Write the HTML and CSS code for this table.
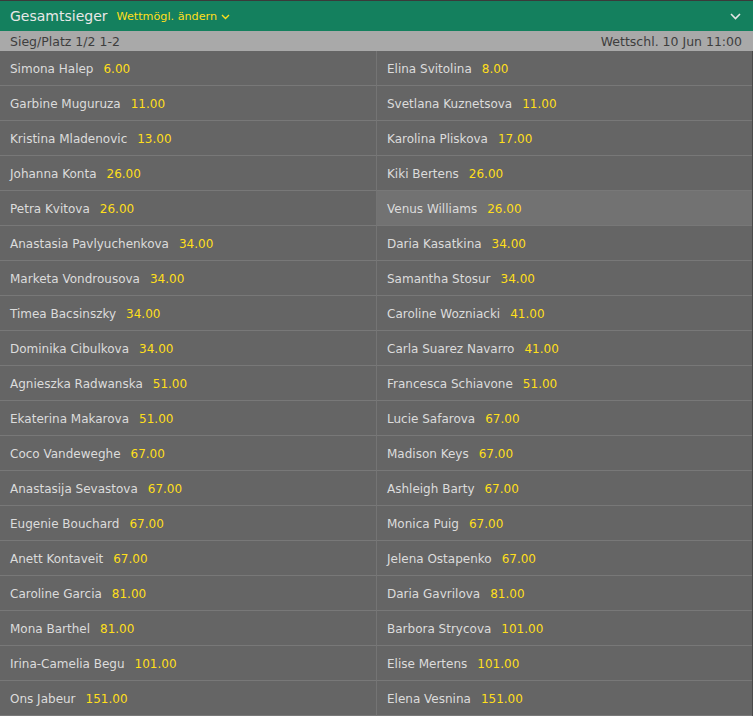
FILE: index.html
```html
<!DOCTYPE html>
<html lang="de">
<head>
<meta charset="utf-8">
<title>Gesamtsieger</title>
<link rel="stylesheet" href="styles.css">
</head>
<body>
<div class="market">
  <div class="header">
    <span class="title">Gesamtsieger</span>
    <span class="change">Wettmögl. ändern
      <svg class="chev-sm" width="9" height="6" viewBox="0 0 9 6"><path d="M1 1 L4.5 4.5 L8 1" fill="none" stroke="#ffdf1b" stroke-width="1.4"/></svg>
    </span>
    <svg class="chev" width="11" height="7" viewBox="0 0 11 7"><path d="M1 1 L5.5 5.5 L10 1" fill="none" stroke="#e6e6e6" stroke-width="1.6"/></svg>
  </div>
  <div class="sub">
    <span>Sieg/Platz 1/2 1-2</span>
    <span>Wettschl. 10 Jun 11:00</span>
  </div>
  <div class="grid">
    <div class="cell"><span class="name">Simona Halep</span><span class="odds">6.00</span></div>
    <div class="cell"><span class="name">Elina Svitolina</span><span class="odds">8.00</span></div>
    <div class="cell"><span class="name">Garbine Muguruza</span><span class="odds">11.00</span></div>
    <div class="cell"><span class="name">Svetlana Kuznetsova</span><span class="odds">11.00</span></div>
    <div class="cell"><span class="name">Kristina Mladenovic</span><span class="odds">13.00</span></div>
    <div class="cell"><span class="name">Karolina Pliskova</span><span class="odds">17.00</span></div>
    <div class="cell"><span class="name">Johanna Konta</span><span class="odds">26.00</span></div>
    <div class="cell"><span class="name">Kiki Bertens</span><span class="odds">26.00</span></div>
    <div class="cell"><span class="name">Petra Kvitova</span><span class="odds">26.00</span></div>
    <div class="cell hover"><span class="name">Venus Williams</span><span class="odds">26.00</span></div>
    <div class="cell"><span class="name">Anastasia Pavlyuchenkova</span><span class="odds">34.00</span></div>
    <div class="cell"><span class="name">Daria Kasatkina</span><span class="odds">34.00</span></div>
    <div class="cell"><span class="name">Marketa Vondrousova</span><span class="odds">34.00</span></div>
    <div class="cell"><span class="name">Samantha Stosur</span><span class="odds">34.00</span></div>
    <div class="cell"><span class="name">Timea Bacsinszky</span><span class="odds">34.00</span></div>
    <div class="cell"><span class="name">Caroline Wozniacki</span><span class="odds">41.00</span></div>
    <div class="cell"><span class="name">Dominika Cibulkova</span><span class="odds">34.00</span></div>
    <div class="cell"><span class="name">Carla Suarez Navarro</span><span class="odds">41.00</span></div>
    <div class="cell"><span class="name">Agnieszka Radwanska</span><span class="odds">51.00</span></div>
    <div class="cell"><span class="name">Francesca Schiavone</span><span class="odds">51.00</span></div>
    <div class="cell"><span class="name">Ekaterina Makarova</span><span class="odds">51.00</span></div>
    <div class="cell"><span class="name">Lucie Safarova</span><span class="odds">67.00</span></div>
    <div class="cell"><span class="name">Coco Vandeweghe</span><span class="odds">67.00</span></div>
    <div class="cell"><span class="name">Madison Keys</span><span class="odds">67.00</span></div>
    <div class="cell"><span class="name">Anastasija Sevastova</span><span class="odds">67.00</span></div>
    <div class="cell"><span class="name">Ashleigh Barty</span><span class="odds">67.00</span></div>
    <div class="cell"><span class="name">Eugenie Bouchard</span><span class="odds">67.00</span></div>
    <div class="cell"><span class="name">Monica Puig</span><span class="odds">67.00</span></div>
    <div class="cell"><span class="name">Anett Kontaveit</span><span class="odds">67.00</span></div>
    <div class="cell"><span class="name">Jelena Ostapenko</span><span class="odds">67.00</span></div>
    <div class="cell"><span class="name">Caroline Garcia</span><span class="odds">81.00</span></div>
    <div class="cell"><span class="name">Daria Gavrilova</span><span class="odds">81.00</span></div>
    <div class="cell"><span class="name">Mona Barthel</span><span class="odds">81.00</span></div>
    <div class="cell"><span class="name">Barbora Strycova</span><span class="odds">101.00</span></div>
    <div class="cell"><span class="name">Irina-Camelia Begu</span><span class="odds">101.00</span></div>
    <div class="cell"><span class="name">Elise Mertens</span><span class="odds">101.00</span></div>
    <div class="cell"><span class="name">Ons Jabeur</span><span class="odds">151.00</span></div>
    <div class="cell"><span class="name">Elena Vesnina</span><span class="odds">151.00</span></div>
  </div>
</div>
</body>
</html>
```
FILE: styles.css
```css
html, body {
  margin: 0;
  padding: 0;
  background: #3a3a3a;
  font-family: "DejaVu Sans", Verdana, sans-serif;
}
.market {
  width: 753px;
  padding-top: 1px;
}
.header {
  height: 30px;
  background: #14805e;
  display: flex;
  align-items: center;
  padding: 0 10px;
  box-sizing: border-box;
}
.title {
  color: #e8e8e8;
  font-size: 14px;
}
.change {
  color: #ffdf1b;
  font-size: 11.2px;
  margin-left: 9px;
  display: flex;
  align-items: center;
  gap: 4px;
  padding-top: 1px;
}
.chev {
  margin-left: auto;
  margin-right: 2px;
}
.sub {
  height: 20px;
  background: #a9a9a9;
  color: #3e3e3e;
  font-size: 12.5px;
  display: flex;
  justify-content: space-between;
  align-items: center;
  padding: 0 11px 0 10px;
}
.grid {
  display: grid;
  grid-template-columns: 377px 1fr;
  background: #656565;
  border-right: 1px solid #4a4a4a;
}
.cell {
  height: 35px;
  box-sizing: border-box;
  border-bottom: 1px solid #787878;
  display: flex;
  align-items: center;
  padding: 1px 0 0 10px;
  font-size: 12px;
}
.cell:nth-child(odd) {
  border-right: 1px solid #747474;
}
.hover {
  background: #727272;
}
.name {
  color: #dcdcdc;
}
.odds {
  color: #ffdf1b;
  margin-left: 10px;
}
```
